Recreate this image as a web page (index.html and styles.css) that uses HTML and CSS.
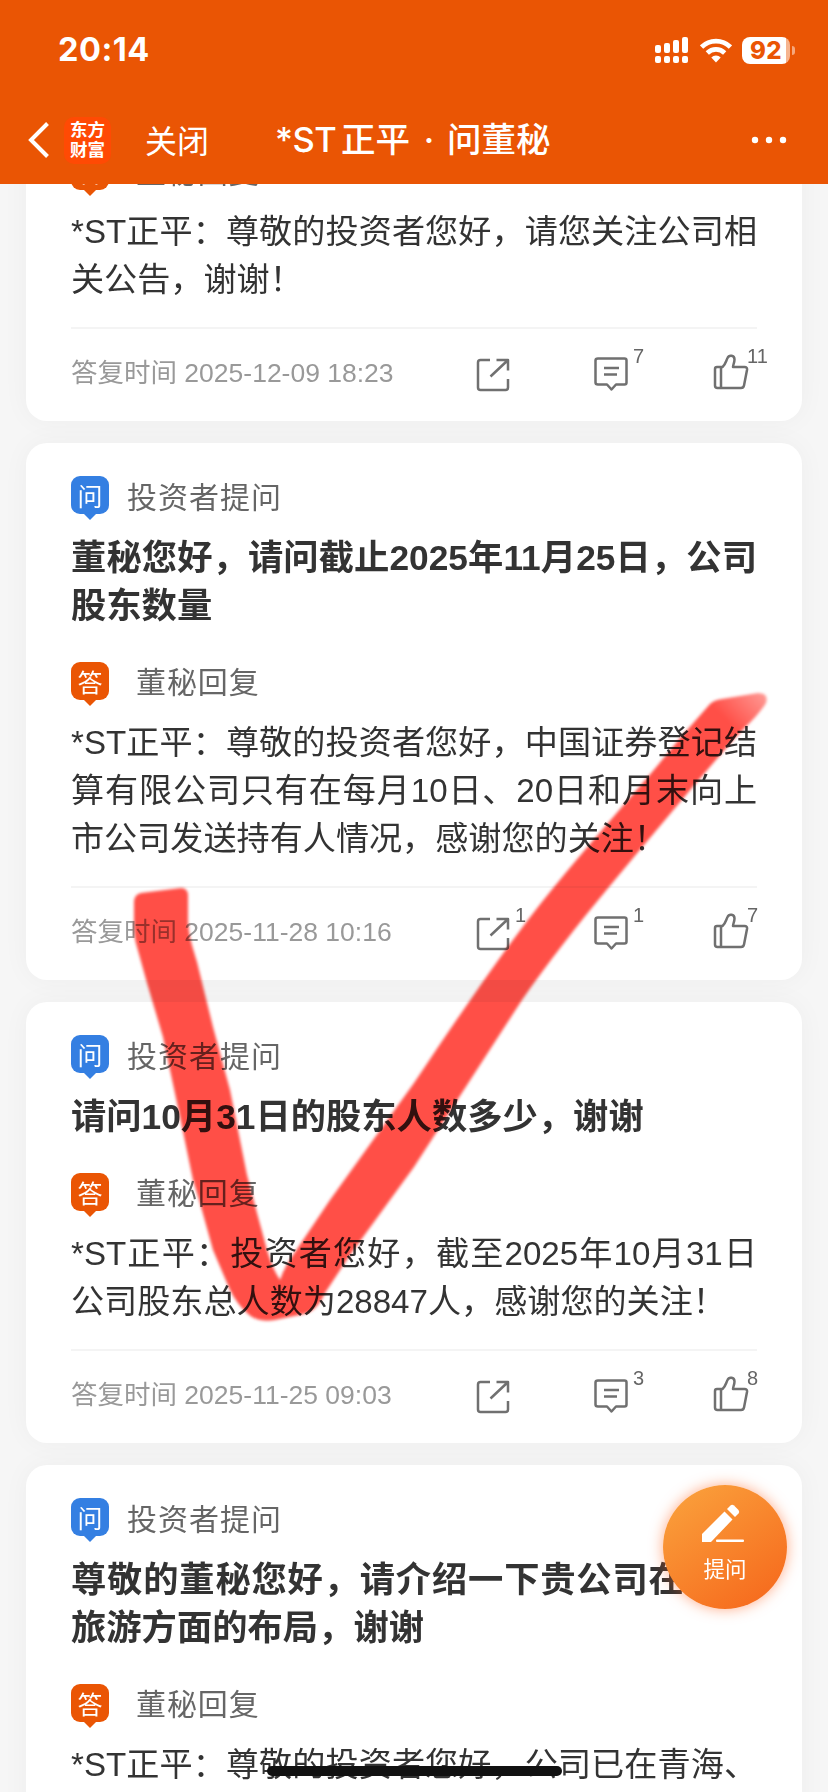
FILE: index.html
```
<!DOCTYPE html>
<html lang="zh-CN">
<head>
<meta charset="utf-8">
<title>*ST正平 · 问董秘</title>
<link rel="stylesheet" href="styles.css">
</head>
<body>
<svg class="defs" width="0" height="0" aria-hidden="true">
  <symbol id="share" viewBox="0 0 34 34"><path d="M14 2H4.500Q2 2 2 4.500V29.500Q2 32 4.500 32H29.500Q32 32 32 29.500V21M20.500 2H32V12.500M31.500 2.500L14.500 18.500"/></symbol>
  <symbol id="comment" viewBox="0 0 34 34"><path d="M4 1.500H30.500Q32.500 1.500 32.500 3.500V25.500Q32.500 27.500 30.500 27.500H22L17.500 32.500L13 27.500H4Q1.500 27.500 1.500 25.500V3.500Q1.500 1.500 4 1.500ZM10 11H25M10 17.500H23"/></symbol>
  <symbol id="like" viewBox="0 0 36 36"><path d="M2 15Q2 13 4 13H9.500C12.500 10.500 13 7 14.500 4C16 0.500 21.500 1 21.500 5.500C21.500 8.500 20 11 20 13H31.500Q34.500 13 34 16L31 31.500Q30.500 34 28 34H4.500Q2 34 2 31.500ZM8 13V34"/></symbol>
</svg>
<header class="header">
  <div class="status">
    <span class="clock">20:14</span>
    <svg class="signal" width="34" height="27" viewBox="0 0 34 27" fill="#fff"><rect x="0" y="8" width="6" height="8" rx="2"/><rect x="9" y="6" width="6" height="10" rx="2"/><rect x="18" y="3" width="6" height="13" rx="2"/><rect x="27" y="0" width="6" height="16" rx="2"/><rect x="0" y="19" width="6" height="7" rx="2"/><rect x="9" y="19" width="6" height="7" rx="2"/><rect x="18" y="19" width="6" height="7" rx="2"/><rect x="27" y="19" width="6" height="7" rx="2"/></svg>
    <svg class="wifi" width="32" height="25" viewBox="0 0 32 25" fill="none" stroke="#fff" stroke-width="4.600"><path d="M1.600 9A20.500 20.500 0 0 1 30.400 9"/><path d="M7.300 15A12.300 12.300 0 0 1 24.700 15"/><path d="M11.300 19.500A6.800 6.800 0 0 1 20.700 19.500L16 24.500Z" fill="#fff" stroke="none"/></svg>
    <div class="battery"><span>92</span></div>
    <i class="nub"></i>
  </div>
  <nav class="nav">
    <svg class="back" width="22" height="36" viewBox="0 0 22 36" fill="none" stroke="#fff" stroke-width="4"><path d="M19.500 1.500L3 18L19.500 34.500"/></svg>
    <div class="logo"><span>东方</span><span>财富</span></div>
    <span class="close">关闭</span>
    <h1 class="heading"><span class="st">*ST</span><span>正平</span><span class="dot">·</span><span>问董秘</span></h1>
    <svg class="more" width="36" height="8" viewBox="0 0 36 8" fill="#fff"><circle cx="4" cy="4" r="3.200"/><circle cx="18" cy="4" r="3.200"/><circle cx="32" cy="4" r="3.200"/></svg>
  </nav>
</header>
<main class="feed">
  <article class="card first">
    <div class="row answer"><span class="badge orange">答</span><span class="label">董秘回复</span></div>
    <div class="body"><p class="full">*ST正平：尊敬的投资者您好，请您关注公司相</p><p>关公告，谢谢！</p></div>
    <footer class="meta"><time>答复时间 2025-12-09 18:23</time>
      <span class="act share"><svg><use href="#share"/></svg></span>
      <span class="act comment"><svg><use href="#comment"/></svg><b>7</b></span>
      <span class="act like"><svg><use href="#like"/></svg><b>11</b></span></footer>
  </article>
  <article class="card">
    <div class="row question"><span class="badge blue">问</span><span class="label">投资者提问</span></div>
    <h2 class="title"><span class="full">董秘您好，请问截止2025年11月25日，公司</span><span>股东数量</span></h2>
    <div class="row answer"><span class="badge orange">答</span><span class="label">董秘回复</span></div>
    <div class="body"><p class="full">*ST正平：尊敬的投资者您好，中国证券登记结</p><p class="full">算有限公司只有在每月10日、20日和月末向上</p><p>市公司发送持有人情况，感谢您的关注！</p></div>
    <footer class="meta"><time>答复时间 2025-11-28 10:16</time>
      <span class="act share"><svg><use href="#share"/></svg><b>1</b></span>
      <span class="act comment"><svg><use href="#comment"/></svg><b>1</b></span>
      <span class="act like"><svg><use href="#like"/></svg><b>7</b></span></footer>
  </article>
  <article class="card">
    <div class="row question"><span class="badge blue">问</span><span class="label">投资者提问</span></div>
    <h2 class="title"><span>请问10月31日的股东人数多少，谢谢</span></h2>
    <div class="row answer"><span class="badge orange">答</span><span class="label">董秘回复</span></div>
    <div class="body"><p class="full">*ST正平：投资者您好，截至2025年10月31日</p><p>公司股东总人数为28847人，感谢您的关注！</p></div>
    <footer class="meta"><time>答复时间 2025-11-25 09:03</time>
      <span class="act share"><svg><use href="#share"/></svg></span>
      <span class="act comment"><svg><use href="#comment"/></svg><b>3</b></span>
      <span class="act like"><svg><use href="#like"/></svg><b>8</b></span></footer>
  </article>
  <article class="card last">
    <div class="row question"><span class="badge blue">问</span><span class="label">投资者提问</span></div>
    <h2 class="title"><span class="wide">尊敬的董秘您好，请介绍一下贵公司在</span><span>旅游方面的布局，谢谢</span></h2>
    <div class="row answer"><span class="badge orange">答</span><span class="label">董秘回复</span></div>
    <div class="body"><p class="full">*ST正平：尊敬的投资者您好，公司已在青海、</p></div>
  </article>
</main>
<svg class="mark" width="828" height="1792" viewBox="0 0 828 1792">
  <defs><linearGradient id="tip" gradientUnits="userSpaceOnUse" x1="762" y1="690" x2="728" y2="722"><stop offset="0" stop-color="#ff9a95"/><stop offset="1" stop-color="#ff4f47"/></linearGradient></defs>
  <path fill="url(#tip)" d="M134 901Q135 894 141 893L181 888Q188 888 188 896V922C189 938 193 948 197 962L213 1027L230 1090L247 1175L257 1213L267 1250Q273 1270 280 1280Q284 1268 291 1258L330 1200L414 1083C455 1022 504 948 554 887C600 831 645 782 681 737L710 704Q714 700 722 699L758 693Q769 693 766 703C758 716 746 726 734 739C692 787 650 838 609 887C575 928 550 960 522 1000L414 1167L350 1255L325 1293Q317 1311 304 1314L275 1320Q257 1323 247 1313Q237 1304 230 1290L213 1250L200 1203L193 1180L180 1117L163 1037L147 983L137 947Q134 938 134 925Z"/>
</svg>
<button class="ask">
  <svg width="44" height="40" viewBox="0 0 44 40" fill="#fff"><path d="M1 30L23.500 7.500L31.500 15.500L10 38H1Z"/><path d="M26 5L29.500 1.500Q31 0 33 1.500L37.500 6Q39 8 37.500 9.500L34 13Z"/><rect x="15" y="35.500" width="28" height="2.500" rx="1"/></svg>
  <span>提问</span>
</button>
<div class="home"></div>
</body>
</html>
```
FILE: styles.css
```
* { box-sizing: border-box; margin: 0; padding: 0; }
body {
  position: relative; width: 828px; height: 1792px; overflow: hidden;
  background: #f6f6f6; color: #333;
  font-family: "Liberation Sans", "Noto Sans CJK SC", sans-serif;
}
.defs { position: absolute; }
.header { position: relative; z-index: 2; height: 184px; background: #ea5504; color: #fff; }
.status { display: flex; align-items: center; height: 100px; padding-left: 58px; }
.clock { width: 597px; font: 700 32.5px/40px Inter, sans-serif; letter-spacing: 0.5px; }
.wifi { margin-left: 11px; }
.battery {
  width: 48px; height: 27px; margin-left: 10px; border-radius: 8px;
  background: linear-gradient(90deg, #fff 44px, #f6b48f 44px);
  color: #ea5504; font: 800 24px/27px Inter, sans-serif; padding-left: 8px; letter-spacing: 0.3px;
}
.nub { width: 3px; height: 9px; margin-left: 2px; border-radius: 0 4px 4px 0; background: #f6a77c; }
.nav { display: flex; align-items: center; height: 80px; padding-left: 28px; }
.logo {
  display: flex; flex-direction: column; align-items: center; justify-content: center;
  width: 47px; height: 47px; margin-left: 14px; border-radius: 10px; background: #ff4a04;
  padding-bottom: 2px;
  font: 700 17.5px/20px "Noto Sans CJK SC", sans-serif;
}
.close { width: 130px; margin: 0 0 3px 34px; font: 400 32px/46px "Noto Sans CJK SC", sans-serif; }
.heading { display: flex; width: 300px; font: 500 34.5px/46px Inter, "Noto Sans CJK SC", sans-serif; white-space: nowrap; }
.heading .st { width: 60px; letter-spacing: -0.5px; }
.heading span + span { margin-left: 6px; }
.heading .dot { width: 22px; margin-left: 8px; text-align: center; }
.heading .dot + span { margin-left: 7px; }
.more { margin-left: 176px; }
.feed { display: flex; flex-direction: column; gap: 22px; margin-top: -64px; padding: 0 26px; }
.card {
  padding: 33px 45px 0; border-radius: 21px; background: #fff;
  box-shadow: 0 0 28px rgba(0, 0, 0, 0.04);
}
.first { padding-top: 32px; }
.last { padding-bottom: 60px; }
.row { display: flex; align-items: flex-start; }
.question { height: 58px; }
.answer { height: 56px; }
.title + .answer { margin-top: 32px; margin-bottom: 1px; }
.badge {
  position: relative; width: 38px; height: 38px; border-radius: 9px; color: #fff;
  font: 400 25px/38px "Noto Sans CJK SC", sans-serif; text-align: center;
}
.badge::after {
  content: ""; position: absolute; left: 13px; top: 38px;
  border: 6px solid transparent; border-top-color: inherit; border-bottom: 0;
}
.blue { background: #347fe2; border-color: #347fe2; }
.orange { background: #ea5504; border-color: #ea5504; }
.label { margin-left: 18px; color: #666; font: 400 30px/38px "Noto Sans CJK SC", sans-serif; letter-spacing: 1px; }
.answer .label { margin-left: 27px; letter-spacing: 0.9px; line-height: 36px; }
.title { font-size: 35.3px; line-height: 48px; font-weight: 700; }
.title span, .body p { display: block; height: 48px; white-space: nowrap; }
.title .wide { letter-spacing: 0.8px; }
.body { font-size: 33.12px; line-height: 48px; }
.full { text-align: justify; text-align-last: justify; }
.meta {
  display: grid; grid-template-columns: 405px 118px 119px 44px;
  height: 94px; margin-top: 23px; border-top: 2px solid #f4f4f4;
}
.meta time { color: #999; font-size: 26.5px; line-height: 88px; white-space: nowrap; }
.act { position: relative; }
.act svg { display: block; width: 34px; height: 34px; fill: none; stroke: #707070; stroke-width: 2.5; stroke-linejoin: round; }
.share { padding-top: 29px; }
.comment { padding-top: 28px; }
.like { padding-top: 25px; }
.act.like svg { width: 36px; height: 36px; }
.act b { position: absolute; top: 14px; left: 39px; color: #666; font-weight: 400; font-size: 20px; line-height: 26px; }
.act.like b { left: 34px; }
.mark { position: absolute; left: 0; top: 0; mix-blend-mode: multiply; filter: blur(1.5px); }
.ask {
  position: absolute; left: 663px; top: 1485px; width: 124px; height: 124px; border: 0; border-radius: 50%;
  display: flex; flex-direction: column; align-items: center; padding-top: 19px;
  background: linear-gradient(145deg, #fa9f3b 8%, #f66a1d 92%); color: #fff;
  box-shadow: 0 0 14px rgba(255, 90, 20, 0.5);
  font: 400 21.500px/30px "Noto Sans CJK SC", sans-serif;
}
.ask svg { margin-left: -5px; }
.ask span { margin-top: 9px; }
.home { position: absolute; left: 267px; top: 1766px; width: 295px; height: 10px; border-radius: 5px; background: #111; }
```
